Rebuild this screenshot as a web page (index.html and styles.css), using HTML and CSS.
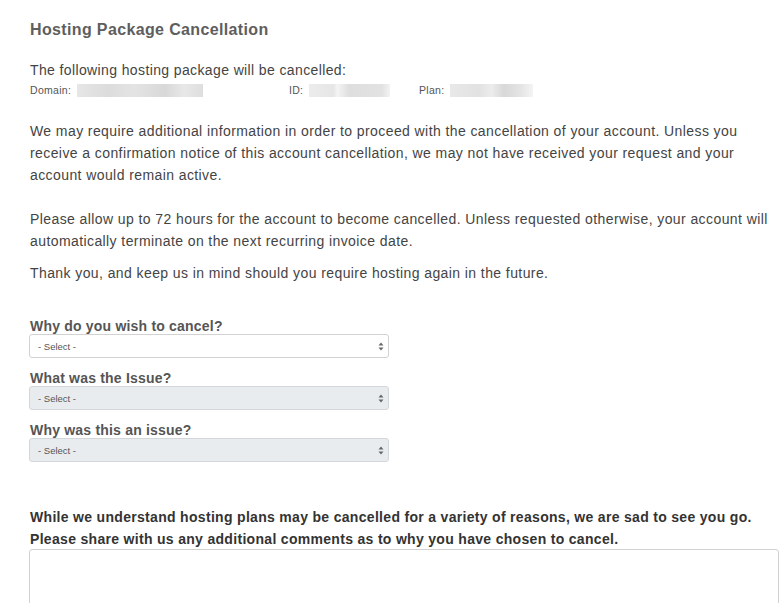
FILE: index.html
```html
<!DOCTYPE html>
<html>
<head>
<meta charset="utf-8">
<link rel="stylesheet" href="styles.css">
</head>
<body>
<div class="page">
  <h1 class="title">Hosting Package Cancellation</h1>
  <p class="intro">The following hosting package will be cancelled:</p>
  <div class="meta">
    <span class="meta-item meta-domain"><span class="meta-label">Domain:</span><span class="blur blur-domain"></span></span>
    <span class="meta-item meta-id"><span class="meta-label">ID:</span><span class="blur blur-id"></span></span>
    <span class="meta-item meta-plan"><span class="meta-label">Plan:</span><span class="blur blur-plan"></span></span>
  </div>
  <p class="text first">We may require additional information in order to proceed with the cancellation of your account. Unless you receive a confirmation notice of this account cancellation, we may not have received your request and your account would remain active.</p>
  <p class="text second">Please allow up to 72 hours for the account to become cancelled. Unless requested otherwise, your account will automatically terminate on the next recurring invoice date.</p>
  <p class="text third">Thank you, and keep us in mind should you require hosting again in the future.</p>

  <div class="form">
    <div class="field">
      <label class="label">Why do you wish to cancel?</label>
      <div class="select">
        <span>- Select -</span>
        <svg class="arrows" width="6" height="9" viewBox="0 0 6 9"><path d="M3 0.5 L5.5 3.5 H0.5 Z M3 8.5 L5.5 5.5 H0.5 Z" fill="#666"/></svg>
      </div>
    </div>
    <div class="field">
      <label class="label">What was the Issue?</label>
      <div class="select disabled">
        <span>- Select -</span>
        <svg class="arrows" width="6" height="9" viewBox="0 0 6 9"><path d="M3 0.5 L5.5 3.5 H0.5 Z M3 8.5 L5.5 5.5 H0.5 Z" fill="#666"/></svg>
      </div>
    </div>
    <div class="field">
      <label class="label">Why was this an issue?</label>
      <div class="select disabled">
        <span>- Select -</span>
        <svg class="arrows" width="6" height="9" viewBox="0 0 6 9"><path d="M3 0.5 L5.5 3.5 H0.5 Z M3 8.5 L5.5 5.5 H0.5 Z" fill="#666"/></svg>
      </div>
    </div>
  </div>

  <p class="comments">While we understand hosting plans may be cancelled for a variety of reasons, we are sad to see you go. Please share with us any additional comments as to why you have chosen to cancel.</p>
  <div class="textarea"></div>
</div>
</body>
</html>
```
FILE: styles.css
```css
html, body {
  margin: 0;
  padding: 0;
  background: #fff;
}
body {
  font-family: "Liberation Sans", Arial, sans-serif;
  color: #444;
  overflow: hidden;
}
.page {
  padding: 20px 0 0 30px;
}
.title {
  margin: 0;
  font-size: 16px;
  line-height: 20px;
  font-weight: bold;
  letter-spacing: 0.36px;
  color: #5e5e5e;
}
.intro {
  margin: 20px 0 0;
  font-size: 14px;
  line-height: 20px;
  letter-spacing: 0.38px;
  color: #444;
}
.meta {
  display: flex;
  align-items: center;
  height: 14px;
  margin-top: 3px;
  font-size: 10.5px;
  letter-spacing: 0.3px;
  color: #555;
}
.meta-item {
  display: flex;
  align-items: center;
  gap: 6px;
}
.meta-domain { width: 259px; }
.meta-id { width: 130px; }
.blur {
  display: inline-block;
  height: 13px;
}
.blur-domain {
  width: 126px;
  background: linear-gradient(90deg, #e6e6e6 0%, #dcdcdc 25%, #e4e4e4 45%, #d8d8d8 70%, #e8e8e8 85%, #dedede 100%);
}
.blur-id {
  width: 81px;
  background: linear-gradient(90deg, #ececec 0%, #e6e6e6 30%, #f4f4f4 35%, #dedede 50%, #e2e2e2 90%, #f3f3f3 100%);
}
.blur-plan {
  width: 83px;
  background: linear-gradient(90deg, #e8e8e8 0%, #e2e2e2 35%, #ececec 50%, #d8d8d8 65%, #e4e4e4 85%, #f4f4f4 100%);
}
.text {
  margin: 0;
  font-size: 14px;
  line-height: 22px;
  letter-spacing: 0.41px;
  max-width: 745px;
}
.text.first { margin-top: 23px; }
.text.second { margin-top: 22px; }
.text.third { margin-top: 10px; }
.form {
  margin-top: 33px;
  display: flex;
  flex-direction: column;
  gap: 11px;
}
.field {
  display: flex;
  flex-direction: column;
}
.label {
  font-size: 14px;
  font-weight: bold;
  line-height: 18px;
  letter-spacing: 0.2px;
  color: #555;
}
.select {
  width: 360px;
  height: 24px;
  box-sizing: border-box;
  margin-left: -1px;
  margin-top: -1px;
  border: 1px solid #d2d2d2;
  border-radius: 3px;
  background: #fff;
  display: flex;
  align-items: center;
  justify-content: space-between;
  padding: 0 4px 0 8px;
  font-size: 9.5px;
  color: #555;
}
.select.disabled {
  background: #e9ecef;
  border-color: #d4d7da;
}
.comments {
  margin: 44px 0 0;
  font-size: 14px;
  line-height: 22px;
  font-weight: bold;
  letter-spacing: 0.31px;
  color: #333;
  max-width: 745px;
}
.textarea {
  margin: -1px 0 0 -1px;
  height: 80px;
  width: 750px;
  box-sizing: border-box;
  border: 1px solid #d2d2d2;
  border-radius: 3px;
}
```
